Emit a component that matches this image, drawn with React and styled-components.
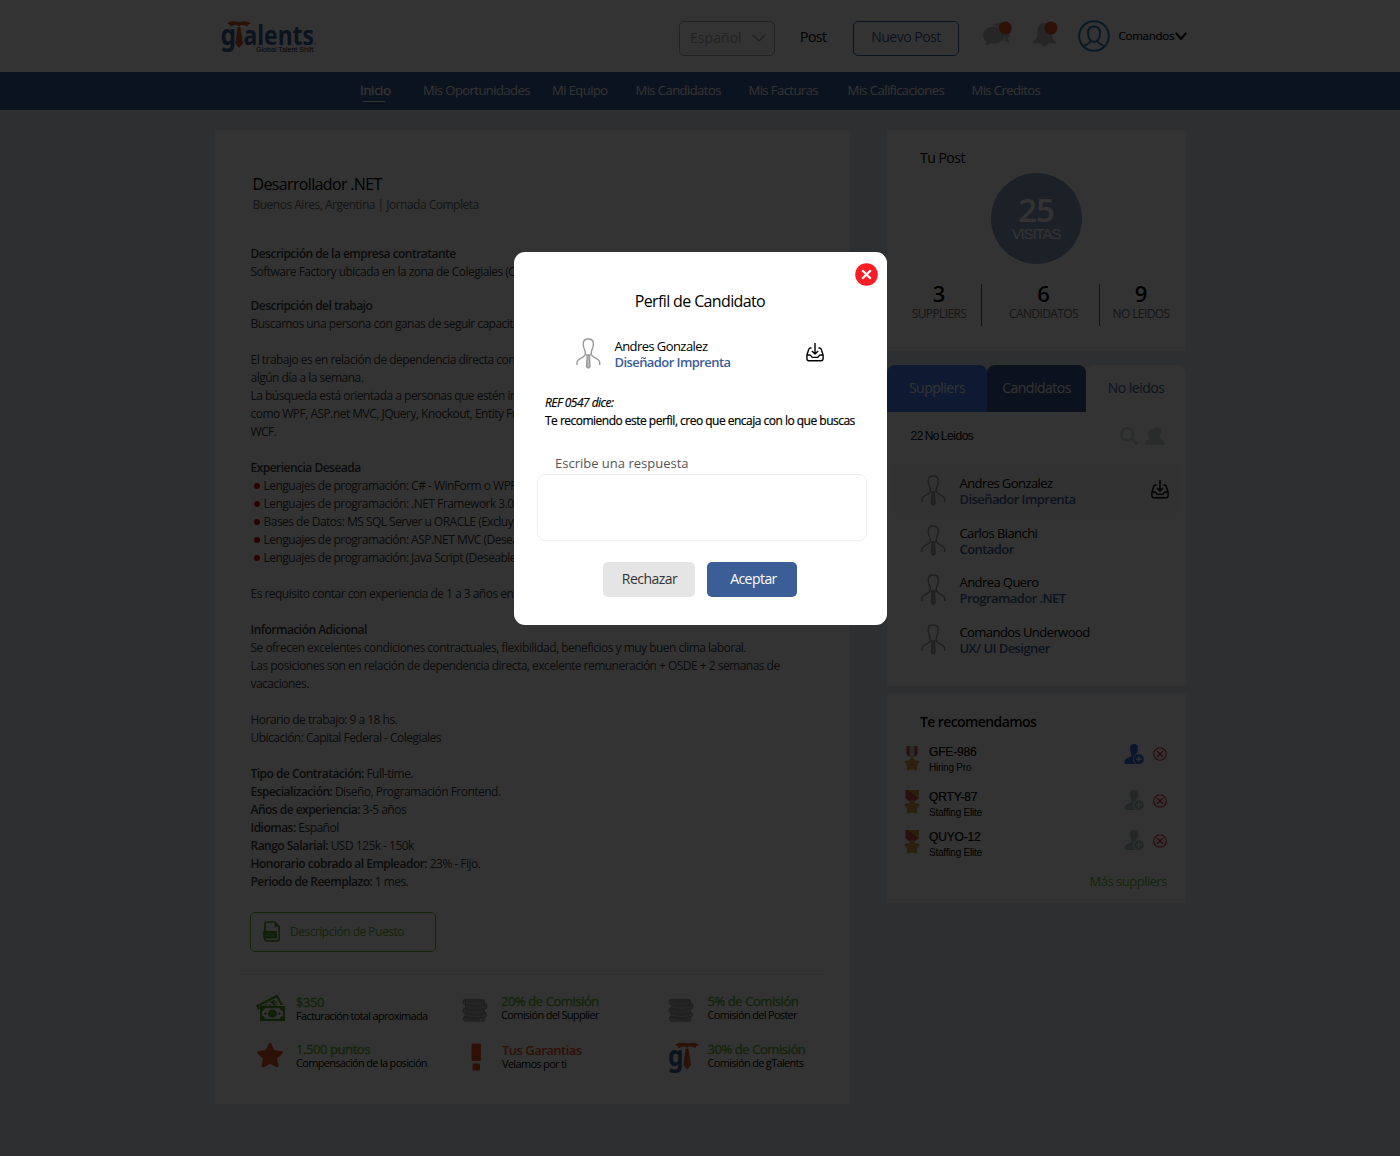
import React from "react";
import styled, { createGlobalStyle } from "styled-components";

const NAVY = "#3b5e97";
const GREEN = "#62b32e";
const LEAF = "#52a028";
const ORANGE = "#e8501e";

const GlobalStyle = createGlobalStyle`
  *, *::before, *::after { box-sizing: border-box; }
  html, body { margin: 0; padding: 0; }
  body {
    background: #e4ebf2;
    font-family: "Open Sans", "Noto Sans", sans-serif;
    color: #000;
    overflow: hidden;
  }
  p, h1, h2, h3, ul { margin: 0; padding: 0; font-weight: 400; }
  svg { display: block; flex: none; overflow: visible; }
  button { font-family: inherit; margin: 0; padding: 0; cursor: pointer; }
`;

const Page = styled.div`
  width: 1400px;
  height: 1156px;
  overflow: hidden;
  white-space: nowrap;
`;

/* ---------- header ---------- */

const Header = styled.header`
  height: 71.5px;
  background: #fff;
  display: flex;
  align-items: flex-start;
  padding: 20px 0 0 220px;
`;

const LanguageSelect = styled.div`
  width: 96px;
  height: 35px;
  margin: 1px 0 0 362px;
  padding: 0 8px 2px 10px;
  border: 1px solid #a8a8a8;
  border-radius: 5px;
  display: flex;
  align-items: center;
  justify-content: space-between;
  font-size: 14px;
  letter-spacing: 0.05px;
  color: #aaa;
`;

const PostLink = styled.a`
  width: 53px;
  margin-left: 25px;
  font-size: 14px;
  line-height: 34px;
  letter-spacing: -0.5px;
`;

const NewPostButton = styled.button`
  width: 106px;
  height: 35px;
  margin-top: 1px;
  padding-bottom: 4px;
  border: 1px solid ${NAVY};
  border-radius: 5px;
  background: transparent;
  color: ${NAVY};
  font-size: 14px;
  letter-spacing: -0.5px;
`;

const HeaderIcons = styled.div`
  display: flex;
  margin-left: 23.5px;
  gap: 20px;
`;

const Account = styled.div`
  display: flex;
  align-items: center;
  margin-left: 18.5px;
  font-size: 11.5px;
  letter-spacing: -0.25px;
  height: 32px;
`;

const AccountName = styled.span`
  margin: 0 1px 1px 8.5px;
  -webkit-text-stroke: 0.2px currentColor;
`;

const Nav = styled.nav`
  height: 38.5px;
  background: ${NAVY};
  display: flex;
  padding-left: 360px;
  color: #fff;
  font-size: 13px;
  letter-spacing: -0.55px;
  line-height: 37px;
`;

const NavItem = styled.a`
  width: ${(p) => p.$w}px;
  flex: none;
  -webkit-text-stroke: ${(p) => (p.$active ? 0.4 : 0)}px currentColor;
  letter-spacing: ${(p) => (p.$active ? -0.25 : -0.55)}px;
  &::after {
    content: "";
    display: ${(p) => (p.$active ? "block" : "none")};
    width: 22px;
    height: 1px;
    margin: -8px 0 0 3px;
    background: #fff;
  }
`;

/* ---------- layout ---------- */

const Columns = styled.main`
  display: grid;
  grid-template-columns: 635px 299px;
  column-gap: 37px;
  align-items: start;
  padding: 20px 0 0 215px;
`;

const JobCard = styled.article`
  height: 974px;
  background: #fff;
  padding: 42px 24px 0 25px;
`;

const JobTitle = styled.h1`
  padding-left: 12.5px;
  font-size: 16px;
  line-height: 24px;
  letter-spacing: -0.65px;
`;

const JobPlace = styled.p`
  padding-left: 12.5px;
  font-size: 12px;
  line-height: 18px;
  letter-spacing: -0.5px;
  color: #666;
`;

const Copy = styled.div`
  padding: 31px 0 0 10.5px;
  font-size: 12px;
  line-height: 18px;
  letter-spacing: -0.52px;
  color: #3a3a3a;
`;

const Section = styled.section`
  margin-bottom: ${(p) => (p.$tight ? 16 : 18)}px;
`;

const Strong = styled.strong`
  font-weight: 600;
`;

const Bullet = styled.p`
  display: flex;
  align-items: center;
  gap: 4px;
  padding-left: 3px;
  &::before {
    content: "";
    width: 6px;
    height: 6px;
    border-radius: 50%;
    background: #d80000;
  }
`;

const DownloadButton = styled.button`
  display: flex;
  align-items: center;
  gap: 9px;
  width: 186px;
  height: 40px;
  margin: 21px 0 22px 10px;
  padding: 0 0 1px 12px;
  border: 1px solid ${GREEN};
  border-radius: 5px;
  background: transparent;
  color: ${GREEN};
  font-size: 12px;
  letter-spacing: -0.5px;
`;

const Benefits = styled.div`
  display: grid;
  grid-template-columns: 206px 206px 1fr;
  grid-template-rows: 48px 48px;
  border-top: 1px solid #e8e8e8;
  padding: 19px 0 0 16px;
`;

const Benefit = styled.div`
  display: flex;
  align-items: flex-start;
`;

const BenefitIcon = styled.div`
  width: 40px;
  padding-top: ${(p) => p.$top}px;
`;

const BenefitText = styled.div`
  padding-top: ${(p) => p.$top || 0}px;
  margin-left: ${(p) => p.$left || 0}px;
`;

const BenefitValue = styled.p`
  font-size: 13px;
  font-weight: ${(p) => (p.$strong ? 600 : 400)};
  -webkit-text-stroke: ${(p) => (p.$strong ? 0 : 0.35)}px currentColor;
  line-height: 15px;
  letter-spacing: ${(p) => (p.$strong ? -0.52 : -0.42)}px;
  color: ${(p) => (p.$strong ? ORANGE : GREEN)};
`;

const BenefitLabel = styled.p`
  font-size: 11px;
  line-height: 11px;
  letter-spacing: -0.68px;
`;

/* ---------- sidebar ---------- */

const Sidebar = styled.aside`
  display: flex;
  flex-direction: column;
`;

const StatsCard = styled.section`
  height: 221px;
  background: #fff;
  padding-top: 18px;
`;

const CardTitle = styled.h2`
  padding-left: 33px;
  font-size: 14px;
  line-height: 20px;
  font-weight: ${(p) => (p.$strong ? 600 : 400)};
  letter-spacing: ${(p) => (p.$strong ? -0.6 : -0.5)}px;
`;

const Visits = styled.div`
  width: 91px;
  height: 91px;
  margin: 5px 0 0 104px;
  border-radius: 50%;
  background: #8ca5c8;
  color: #fff;
  display: flex;
  flex-direction: column;
  align-items: center;
  padding: 18px 1px 0 0;
`;

const VisitsCount = styled.span`
  font-size: 33px;
  line-height: 37px;
  font-weight: 600;
  letter-spacing: -1.2px;
`;

const VisitsLabel = styled.span`
  font-family: "Liberation Sans", Arial, sans-serif;
  font-size: 15px;
  line-height: 12px;
  letter-spacing: -1.1px;
`;

const Stats = styled.div`
  display: grid;
  grid-template-columns: 95px 118px 82px;
  margin-top: 20px;
`;

const Stat = styled.div`
  height: 42px;
  text-align: center;
  padding-left: ${(p) => p.$shift}px;
  border-right: ${(p) => (p.$last ? 0 : 1)}px solid ${NAVY};
`;

const StatValue = styled.p`
  font-size: 22px;
  font-weight: 600;
  line-height: 19px;
`;

const StatLabel = styled.p`
  font-size: 12px;
  line-height: 22px;
  letter-spacing: -0.6px;
  color: #6c6c6c;
`;

const Tabs = styled.div`
  display: grid;
  grid-template-columns: 100px 99px 100px;
  margin-top: 14px;
`;

const Tab = styled.div`
  height: 47px;
  border-radius: 8px 8px 0 0;
  text-align: center;
  font-size: 14px;
  line-height: 45px;
  letter-spacing: -0.5px;
  background: ${(p) => p.$bg};
  color: ${(p) => p.$fg};
`;

const ListCard = styled.section`
  height: 274px;
  background: #fff;
  padding: 11px 7px 0;
`;

const ListHeader = styled.div`
  display: flex;
  align-items: center;
  height: 25px;
  padding: 0 14px 0 16.5px;
  margin-bottom: 16px;
  font-family: "Liberation Sans", Arial, sans-serif;
  font-size: 12px;
  letter-spacing: -0.45px;
  word-spacing: -1.2px;
`;

const ListTools = styled.div`
  display: flex;
  gap: 7px;
  margin-left: auto;
`;

const PersonRow = styled.div`
  display: flex;
  align-items: flex-start;
  height: ${(p) => (p.$active ? 52 : 49.4)}px;
  padding: ${(p) => (p.$active ? 11 : 9)}px 10px 0 27px;
  background: ${(p) => (p.$active ? "#f9f9f9" : "transparent")};
`;

const PersonText = styled.div`
  margin: 0 auto 0 13.5px;
`;

const PersonName = styled.p`
  font-size: 13px;
  line-height: 17px;
  letter-spacing: -0.57px;
`;

const PersonRole = styled.p`
  font-size: 13px;
  line-height: 15px;
  font-weight: 600;
  letter-spacing: -0.57px;
  color: ${NAVY};
`;

const InboxSlot = styled.span`
  padding-top: 5px;
`;

const RecommendCard = styled.section`
  height: 209px;
  margin-top: 8px;
  padding-top: 18px;
  background: #fff;
`;

const SupplierList = styled.div`
  padding-top: 11px;
`;

const SupplierRow = styled.div`
  display: flex;
  align-items: flex-start;
  height: ${(p) => p.$h}px;
  padding: 0 19px 0 17px;
`;

const MedalSlot = styled.span`
  padding-top: ${(p) => (p.$elite ? 1 : 2)}px;
`;

const SupplierText = styled.div`
  margin: 1px auto 0 9px;
  font-family: "Liberation Sans", Arial, sans-serif;
`;

const SupplierCode = styled.p`
  font-size: 12px;
  line-height: 16px;
  letter-spacing: -0.15px;
  -webkit-text-stroke: 0.2px currentColor;
`;

const SupplierLevel = styled.p`
  font-size: 10px;
  line-height: 15px;
  letter-spacing: -0.22px;
`;

const SupplierActions = styled.div`
  display: flex;
  align-items: center;
  gap: 8px;
  margin-top: ${(p) => (p.$elite ? 2 : 0.5)}px;
`;

const MoreLink = styled.p`
  padding: 4px 19px 0 0;
  text-align: right;
  font-size: 13px;
  line-height: 18px;
  letter-spacing: -0.5px;
  color: ${GREEN};
`;

/* ---------- dialog ---------- */

const Backdrop = styled.div`
  position: fixed;
  inset: 0;
  background: rgba(0, 0, 0, 0.8);
  display: flex;
  justify-content: center;
  align-items: flex-start;
  padding: 252.4px 0 0 1.8px;
  white-space: nowrap;
`;

const Dialog = styled.div`
  width: 373px;
  height: 373px;
  border-radius: 11px;
  background: #fff;
  display: flex;
  flex-direction: column;
  padding: 11px 9px 0 22.6px;
`;

const CloseButton = styled.button`
  align-self: flex-end;
  width: 23px;
  height: 23px;
  border: 0;
  background: transparent;
`;

const DialogTitle = styled.h2`
  padding-right: 15.5px;
  text-align: center;
  font-size: 16px;
  line-height: 24px;
  letter-spacing: -0.63px;
  margin-top: 3px;
`;

const Candidate = styled.div`
  display: flex;
  align-items: flex-start;
  padding: 25px 54px 0 39px;
  height: 81px;
`;

const Reference = styled.p`
  padding-left: 8px;
  font-size: 12px;
  line-height: 18px;
  font-style: italic;
  letter-spacing: -0.53px;
  -webkit-text-stroke: 0.2px currentColor;
`;

const Message = styled.p`
  padding-left: 8px;
  font-size: 12px;
  line-height: 18px;
  letter-spacing: -0.51px;
  -webkit-text-stroke: 0.2px currentColor;
`;

const FieldLabel = styled.label`
  padding-left: 18px;
  margin-top: 24px;
  font-size: 13px;
  line-height: 19px;
  color: #555;
`;

const Field = styled.textarea`
  display: block;
  width: 330px;
  height: 67px;
  margin: 1px 0 0;
  border: 1px solid #eee;
  border-radius: 8px;
  resize: none;
  background: #fff;
`;

const Actions = styled.div`
  display: flex;
  gap: 12px;
  padding: 21px 0 0 66px;
`;

const ActionButton = styled.button`
  width: ${(p) => (p.$primary ? 90 : 92)}px;
  height: 35px;
  padding: ${(p) => (p.$primary ? "0 0 3px 3px" : "0 0 3px 1px")};
  border: 0;
  border-radius: 5px;
  background: ${(p) => (p.$primary ? NAVY : "#e5e5e5")};
  color: ${(p) => (p.$primary ? "#fff" : "#333")};
  font-size: 14px;
  letter-spacing: -0.55px;
`;

/* ---------- drawings ---------- */

const Tie = () => (
  <g fill="#d9541e">
    <path d="M0 2.600C3 .2 6.500-.4 9.800.6L10.600 4C8 3.600 5.600 4.200 3.600 5.400L2.600 3.600z" />
    <path d="M24 2.600C21 .2 17.500-.4 14.200.6L13.400 4C16 3.600 18.400 4.200 20.400 5.400L21.400 3.600z" />
    <path d="M9.800.8H14.200L13.400 5H10.600z" />
    <path d="M10.600 6H13.400L16 22.500L12 27L8.400 22.500z" />
  </g>
);

const Logo = () => (
  <svg width="97" height="36" viewBox="0 0 97 36">
    <g fill={NAVY} fontWeight="700" fontFamily="Noto Sans, sans-serif">
      <text x="0.500" y="24.700" fontSize="28" textLength="15.500" lengthAdjust="spacingAndGlyphs">g</text>
      <text x="23.500" y="24.700" fontSize="27" textLength="70.500" lengthAdjust="spacingAndGlyphs">alents</text>
    </g>
    <g transform="translate(7 1)"><Tie /></g>
    <circle cx="95" cy="23.800" r=".8" fill={NAVY} />
    <text x="36" y="32" fontSize="7" fill="#222" fontFamily="Liberation Sans, sans-serif" textLength="57.500" lengthAdjust="spacingAndGlyphs">Global Talent Shift</text>
  </svg>
);

const MiniLogo = () => (
  <svg width="31" height="31" viewBox="0 0 31 31">
    <text x="0" y="23.500" fontSize="28" fontWeight="700" fontFamily="Noto Sans, sans-serif" fill={NAVY} textLength="15.500" lengthAdjust="spacingAndGlyphs">g</text>
    <g transform="translate(7 .5)"><Tie /></g>
  </svg>
);

const ChevronDown = ({ width, height, stroke, color }) => (
  <svg width={width} height={height} viewBox={`0 0 ${width} ${height}`} fill="none" stroke={color} strokeWidth={stroke}>
    <path d={`M.8 .8L${width / 2} ${height - 1}L${width - 0.8} .8`} />
  </svg>
);

const ChatIcon = () => (
  <svg width="29" height="27" viewBox="0 0 29 27">
    <g fill="#bdbdbd">
      <path d="M9 5.200C12 3 17 2.400 20 4.200C27 7 29 14 24.800 18.200C25 20 26 21.400 27 22.600C24.500 22.600 23 22 21.400 20.600C24 15 22 5 9 5.200z" />
      <path d="M11 6.600C17 6.600 22 10.500 22 15.200C22 20 17 23.800 11 23.800C9.500 23.800 8.200 23.600 7 23.200C5.500 24.600 3.500 25.600 1.800 25.800C3 24.400 3.600 22.800 3.600 21.400C1.400 19.800 0 17.600 0 15.200C0 10.500 5 6.600 11 6.600z" />
    </g>
    <circle cx="22.300" cy="7.900" r="6.500" fill={ORANGE} />
  </svg>
);

const BellIcon = () => (
  <svg width="28" height="27" viewBox="0 0 28 27">
    <path
      d="M12.500 3C17.500 3 19.500 7 19.500 11.500C19.500 17 21 19.500 24 22V23.500H1V22C4 19.500 5.500 17 5.500 11.500C5.500 7 8 3 12.500 3zM9.200 23H15.600A3.200 3.200 0 0 1 9.200 23z"
      fill="#bdbdbd"
    />
    <circle cx="19" cy="7.900" r="6.500" fill={ORANGE} />
  </svg>
);

const AvatarIcon = () => (
  <svg width="32" height="32" viewBox="0 0 32 32" fill="none" stroke="#2a7fb0" strokeWidth="2">
    <circle cx="16" cy="16" r="14.800" />
    <path d="M16 6.500C20 6.500 22 9 22 13C22 18 19.500 22 16 22C12.500 22 10 18 10 13C10 9 12 6.500 16 6.500z" />
    <path d="M5.500 26.500C7.500 24 11.500 24.500 12.800 21M26.500 26.500C24.500 24 20.500 24.500 19.200 21" />
  </svg>
);

const PersonIcon = () => (
  <svg width="25" height="31" viewBox="0 0 25 31" fill="none" stroke="#999" strokeWidth="1.400">
    <path d="M1 27V24.500C1 22 3.400 21 6.400 19.400C8.600 18.200 9.300 17.400 9.300 15.800V14.200C9.300 12 7.300 10.600 7.300 7V5.200C7.300 2.600 9 1 12.300 1C15.600 1 17.300 2.600 17.300 5.200V7C17.300 10.600 15.300 12 15.300 14.200V15.800C15.300 17.400 16 18.200 18.200 19.400C21.200 21 23.700 22 23.700 24.500V27" />
    <path d="M10.600 17L11.200 18.500L10.600 28.600L12.300 30L14 28.600L13.400 18.500L14 17z" fill="#bbb" />
  </svg>
);

const InboxIcon = () => (
  <svg width="18" height="19" viewBox="0 0 18 19" fill="none" stroke="#000" strokeWidth="1.400" strokeLinejoin="round">
    <path d="M5.500 5H4.500C3.500 5 3 5.500 2.700 6.500L.9 12V15.500Q.9 17.700 3 17.700H15Q17.100 17.700 17.100 15.500V12L15.300 6.500C15 5.500 14.500 5 13.500 5H12.500" />
    <path d="M1 12H3.600Q4.800 12 5.300 13.200Q5.800 14.400 7 14.400H11Q12.200 14.400 12.700 13.200Q13.200 12 14.400 12H17" />
    <path d="M9 0V10.800M5.900 7.900L9 11L12.100 7.900" />
  </svg>
);

const SearchIcon = () => (
  <svg width="18" height="18" viewBox="0 0 18 18" fill="none" stroke="#d3d8da" strokeWidth="2.200">
    <circle cx="7.200" cy="7.200" r="6" />
    <path d="M11.500 11.500L17 17" strokeWidth="3" />
  </svg>
);

const UsersIcon = () => (
  <svg width="20" height="18" viewBox="0 0 20 18" fill="#d0d5d7">
    <path d="M11 .4C14.500 0 16.400 2 16.200 5C16 7.500 14.800 8.500 14.800 10.200C15.200 12.200 19.500 12 19.800 17.800H12L9 2z" />
    <path d="M7.500 1.800C10.600 1.500 12.200 3.300 12 6.300C11.800 8.800 10.600 9.400 10.600 11C11 13 15 12.600 15.400 17.800H0C.2 12.800 4.400 13 4.800 11C4.800 9.400 3.400 8.800 3.200 6.300C3 3.600 4.600 2 7.500 1.800z" />
  </svg>
);

const STAR = "M8 .4L10.500 4.200L15 5.200L12.300 9L12.500 13.600L8 12.200L3.500 13.600L3.700 9L1 5.200L5.500 4.200z";

const MedalIcon = ({ elite }) => (
  <svg width="16" height="26" viewBox="0 0 16 26">
    {elite ? (
      <>
        <path d="M1.500 1H14.500V9.500L8 14L1.500 9.500z" fill="#d24b4b" />
        <path d="M4 1H14.500V9.500z" fill="#dba02c" />
      </>
    ) : (
      <>
        <path d="M2.500 1H13.500V9L12 11.500H4L2.500 9z" fill="#cf4a4b" />
        <path d="M5.500 1H10.500V11.500H5.500z" fill="#d0d0d0" />
      </>
    )}
    <g transform={elite ? "translate(0 10.5)" : "translate(0 11.5)"}>
      <path d={STAR} fill="#d9a543" stroke="#d9a543" strokeWidth="1.200" strokeLinejoin="round" />
      <circle cx="8" cy="7.500" r="2" fill="#cf9a3a" />
    </g>
  </svg>
);

const AddUserIcon = ({ color }) => (
  <svg width="21" height="21" viewBox="0 0 21 21" fill={color}>
    <path d="M10 0C12.800 0 14.200 2 14 4.800C13.900 7.500 12.800 9 12.500 10.200C12.500 11.500 13.500 12 14.500 12.500V20H1.500C.5 20 .3 19 .5 17.500C1 13.500 6 14 7.400 11.800C7.600 10 6.200 8 6 4.800C5.800 2 7.200 0 10 0z" />
    <circle cx="14.800" cy="15.200" r="5.400" stroke="#fff" strokeWidth=".8" />
    <path d="M14.800 12.300V18.100M11.900 15.200H17.700" stroke="#fff" strokeWidth="1.200" />
  </svg>
);

const RejectIcon = () => (
  <svg width="14" height="14" viewBox="0 0 14 14" fill="none" stroke="#e02a2f" strokeWidth="1.100">
    <circle cx="7" cy="7" r="6.300" />
    <path d="M4 4L10 10M10 4L4 10" />
  </svg>
);

const PdfIcon = () => (
  <svg width="18" height="21" viewBox="0 0 18 21">
    <path d="M2 10V2.500Q2 1 3.500 1H11.500L16.200 5.800V18Q16.200 19.800 14.700 19.800H3.500Q2 19.800 2 18.500V17" fill="none" stroke={LEAF} strokeWidth="1.700" />
    <path d="M11.500 1V5.800H16.200z" fill={LEAF} />
    <rect x="0" y="10" width="14" height="7.500" rx="1" fill={LEAF} />
    <text x="2" y="16" fontSize="6" fontWeight="700" fill="#fff" fillOpacity=".3" fontFamily="Open Sans, sans-serif">PDF</text>
  </svg>
);

const MoneyIcon = () => (
  <svg width="30" height="28" viewBox="0 0 30 28">
    <path d="M0 11.500L21.300.5L27 11H24.500L20.500 3.500L3 12.500L4 14.500L2 16z" fill={LEAF} />
    <path d="M4 13L18.500 5.500L21 11.500H4z" fill={LEAF} />
    <circle cx="20.300" cy="8.500" r="1.900" fill="#fff" />
    <circle cx="20.300" cy="8.500" r="1" fill={LEAF} />
    <path d="M10.500 11.500Q10.500 8.800 13.500 8.500Q16.500 8.500 17.800 11.500z" fill="#fff" />
    <path d="M12 11.500Q13.500 9.500 16 11.500z" fill={LEAF} />
    <rect x="4" y="12" width="25" height="15" fill={LEAF} />
    <path d="M9 14.300H24Q24.300 17 27 17.300V21.700Q24.300 22 24 24.700H9Q8.700 22 6 21.700V17.300Q8.700 17 9 14.300z" fill="#fff" />
    <ellipse cx="16.500" cy="19.500" rx="4.600" ry="4" fill={LEAF} />
    <path d="M9.500 18.100V20.900M8.100 19.500H10.900M23.500 18.100V20.900M22.100 19.500H24.900" stroke={LEAF} />
  </svg>
);

const COINS = [
  [1, 17.6],
  [2.5, 13.4],
  [0.5, 9.2],
  [3, 5],
  [0.5, 0.8],
];

const CoinsIcon = () => (
  <svg width="26" height="25" viewBox="0 0 26 25">
    {COINS.map(([x, y]) => (
      <g key={y}>
        <rect x={x} y={y} width="22.500" height="6.200" rx="3" fill="#a6a6a6" />
        <path d={`M${x + 1.5} ${y + 3.6}Q${x + 11.2} ${y + 6.6} ${x + 21} ${y + 3.6}`} fill="none" stroke="#e6e6e6" strokeWidth="1.100" strokeDasharray="1.100 1.500" />
      </g>
    ))}
  </svg>
);

const StarIcon = () => (
  <svg width="28" height="27" viewBox="0 0 28 27">
    <path
      d="M14 2L17.500 9.400L25.600 10.500L19.700 16.200L21.200 24.200L14 20.300L6.800 24.200L8.300 16.200L2.400 10.500L10.500 9.400z"
      fill={ORANGE}
      stroke={ORANGE}
      strokeWidth="2.600"
      strokeLinejoin="round"
    />
  </svg>
);

const AlertIcon = () => (
  <svg width="29" height="28" viewBox="0 0 29 28" fill={ORANGE}>
    <rect x="9.500" y=".5" width="9.500" height="17.500" rx="1.200" />
    <rect x="10.500" y="20.500" width="7.500" height="7" rx="1.200" />
  </svg>
);

/* ---------- data ---------- */

const NAV = [
  ["Inicio", 63],
  ["Mis Oportunidades", 129],
  ["Mi Equipo", 83.5],
  ["Mis Candidatos", 113],
  ["Mis Facturas", 99],
  ["Mis Calificaciones", 124],
  ["Mis Creditos", 80],
];

const SKILLS = [
  "Lenguajes de programación: C# - WinForm o WPF (Excluyente)",
  "Lenguajes de programación: .NET Framework 3.0 (Excluyente)",
  "Bases de Datos: MS SQL Server u ORACLE (Excluyente)",
  "Lenguajes de programación: ASP.NET MVC (Deseable)",
  "Lenguajes de programación: Java Script (Deseable)",
];

const TERMS = [
  ["Tipo de Contratación:", "Full-time."],
  ["Especialización:", "Diseño, Programación Frontend."],
  ["Años de experiencia:", "3-5 años"],
  ["Idiomas:", "Español"],
  ["Rango Salarial:", "USD 125k - 150k"],
  ["Honorario cobrado al Empleador:", "23% - Fijo."],
  ["Periodo de Reemplazo:", "1 mes."],
];

const BENEFITS = [
  { icon: <MoneyIcon />, iconTop: 0, value: "$350", label: "Facturación total aproximada", top: 1 },
  { icon: <CoinsIcon />, iconTop: 4, value: "20% de Comisión", label: "Comisión del Supplier", left: -1 },
  { icon: <CoinsIcon />, iconTop: 4, value: "5% de Comisión", label: "Comisión del Poster", left: -0.5 },
  { icon: <StarIcon />, iconTop: 0, value: "1.500 puntos", label: "Compensación de la posición" },
  { icon: <AlertIcon />, iconTop: 1, value: "Tus Garantias", label: "Velamos por ti", strong: true, top: 1 },
  { icon: <MiniLogo />, iconTop: 0, value: "30% de Comisión", label: "Comisión de gTalents", left: -0.5 },
];

const PEOPLE = [
  ["Andres Gonzalez", "Diseñador Imprenta"],
  ["Carlos Bianchi", "Contador"],
  ["Andrea Quero", "Programador .NET"],
  ["Comandos Underwood", "UX/ UI Designer"],
];

const SUPPLIERS = [
  { code: "GFE-986", level: "Hiring Pro", height: 45, color: "#2f6fe0" },
  { code: "QRTY-87", level: "Staffing Elite", elite: true, height: 40, color: "#b4c0c2" },
  { code: "QUYO-12", level: "Staffing Elite", elite: true, height: 40, color: "#b4c0c2" },
];

const Person = ({ name, role }) => (
  <>
    <PersonIcon />
    <PersonText>
      <PersonName>{name}</PersonName>
      <PersonRole>{role}</PersonRole>
    </PersonText>
  </>
);

export default function App() {
  return (
    <Page>
      <GlobalStyle />
      <Header>
        <Logo />
        <LanguageSelect>
          Español
          <ChevronDown width={14} height={8} stroke={1.3} color="#999" />
        </LanguageSelect>
        <PostLink>Post</PostLink>
        <NewPostButton>Nuevo Post</NewPostButton>
        <HeaderIcons>
          <ChatIcon />
          <BellIcon />
        </HeaderIcons>
        <Account>
          <AvatarIcon />
          <AccountName>Comandos</AccountName>
          <ChevronDown width={12} height={8} stroke={2} color="#000" />
        </Account>
      </Header>

      <Nav>
        {NAV.map(([label, width], i) => (
          <NavItem key={label} $w={width} $active={i === 0}>{label}</NavItem>
        ))}
      </Nav>

      <Columns>
        <JobCard>
          <JobTitle>Desarrollador .NET</JobTitle>
          <JobPlace>Buenos Aires, Argentina | Jornada Completa</JobPlace>
          <Copy>
            <Section $tight>
              <p><Strong>Descripción de la empresa contratante</Strong></p>
              <p>Software Factory ubicada en la zona de Colegiales (CABA)</p>
            </Section>
            <Section>
              <p><Strong>Descripción del trabajo</Strong></p>
              <p>Buscamos una persona con ganas de seguir capacitándose</p>
            </Section>
            <Section>
              <p>El trabajo es en relación de dependencia directa con</p>
              <p>algún día a la semana.</p>
              <p>La búsqueda está orientada a personas que estén in</p>
              <p>como WPF, ASP.net MVC, JQuery, Knockout, Entity Fr</p>
              <p>WCF.</p>
            </Section>
            <Section>
              <p><Strong>Experiencia Deseada</Strong></p>
              {SKILLS.map((skill) => <Bullet key={skill}>{skill}</Bullet>)}
            </Section>
            <Section>
              <p>Es requisito contar con experiencia de 1 a 3 años en</p>
            </Section>
            <Section>
              <p><Strong>Información Adicional</Strong></p>
              <p>Se ofrecen excelentes condiciones contractuales, flexibilidad, beneficios y muy buen clima laboral.</p>
              <p>Las posiciones son en relación de dependencia directa, excelente remuneración + OSDE + 2 semanas de</p>
              <p>vacaciones.</p>
            </Section>
            <Section>
              <p>Horario de trabajo: 9 a 18 hs.</p>
              <p>Ubicación: Capital Federal - Colegiales</p>
            </Section>
            <Section>
              {TERMS.map(([term, detail]) => (
                <p key={term}><Strong>{term}</Strong> {detail}</p>
              ))}
            </Section>
          </Copy>
          <DownloadButton><PdfIcon />Descripción de Puesto</DownloadButton>
          <Benefits>
            {BENEFITS.map((b) => (
              <Benefit key={b.value}>
                <BenefitIcon $top={b.iconTop}>{b.icon}</BenefitIcon>
                <BenefitText $top={b.top} $left={b.left}>
                  <BenefitValue $strong={b.strong}>{b.value}</BenefitValue>
                  <BenefitLabel>{b.label}</BenefitLabel>
                </BenefitText>
              </Benefit>
            ))}
          </Benefits>
        </JobCard>

        <Sidebar>
          <StatsCard>
            <CardTitle>Tu Post</CardTitle>
            <Visits>
              <VisitsCount>25</VisitsCount>
              <VisitsLabel>VISITAS</VisitsLabel>
            </Visits>
            <Stats>
              <Stat $shift={10}><StatValue>3</StatValue><StatLabel>SUPPLIERS</StatLabel></Stat>
              <Stat $shift={6}><StatValue>6</StatValue><StatLabel>CANDIDATOS</StatLabel></Stat>
              <Stat $last><StatValue>9</StatValue><StatLabel>NO LEIDOS</StatLabel></Stat>
            </Stats>
          </StatsCard>

          <Tabs>
            <Tab $bg="#4080f5" $fg="#fff">Suppliers</Tab>
            <Tab $bg="#385792" $fg="#fff">Candidatos</Tab>
            <Tab $bg="#fff" $fg={NAVY}>No leidos</Tab>
          </Tabs>
          <ListCard>
            <ListHeader>
              22 No Leidos
              <ListTools><SearchIcon /><UsersIcon /></ListTools>
            </ListHeader>
            {PEOPLE.map(([name, role], i) => (
              <PersonRow key={name} $active={i === 0}>
                <Person name={name} role={role} />
                {i === 0 && <InboxSlot><InboxIcon /></InboxSlot>}
              </PersonRow>
            ))}
          </ListCard>

          <RecommendCard>
            <CardTitle $strong>Te recomendamos</CardTitle>
            <SupplierList>
              {SUPPLIERS.map((s) => (
                <SupplierRow key={s.code} $h={s.height}>
                  <MedalSlot $elite={s.elite}><MedalIcon elite={s.elite} /></MedalSlot>
                  <SupplierText>
                    <SupplierCode>{s.code}</SupplierCode>
                    <SupplierLevel>{s.level}</SupplierLevel>
                  </SupplierText>
                  <SupplierActions $elite={s.elite}>
                    <AddUserIcon color={s.color} />
                    <RejectIcon />
                  </SupplierActions>
                </SupplierRow>
              ))}
            </SupplierList>
            <MoreLink>Más suppliers</MoreLink>
          </RecommendCard>
        </Sidebar>
      </Columns>

      <Backdrop>
        <Dialog role="dialog">
          <CloseButton aria-label="Cerrar">
            <svg width="23" height="23" viewBox="0 0 23 23">
              <circle cx="11.500" cy="11.500" r="11.300" fill="#fb1c25" />
              <path d="M7.200 7.200L15.800 15.800M15.800 7.200L7.200 15.800" stroke="#fff" strokeWidth="2.200" />
            </svg>
          </CloseButton>
          <DialogTitle>Perfil de Candidato</DialogTitle>
          <Candidate>
            <Person name="Andres Gonzalez" role="Diseñador Imprenta" />
            <InboxSlot><InboxIcon /></InboxSlot>
          </Candidate>
          <Reference>REF 0547 dice:</Reference>
          <Message>Te recomiendo este perfil, creo que encaja con lo que buscas</Message>
          <FieldLabel htmlFor="reply">Escribe una respuesta</FieldLabel>
          <Field id="reply" />
          <Actions>
            <ActionButton>Rechazar</ActionButton>
            <ActionButton $primary>Aceptar</ActionButton>
          </Actions>
        </Dialog>
      </Backdrop>
    </Page>
  );
}
